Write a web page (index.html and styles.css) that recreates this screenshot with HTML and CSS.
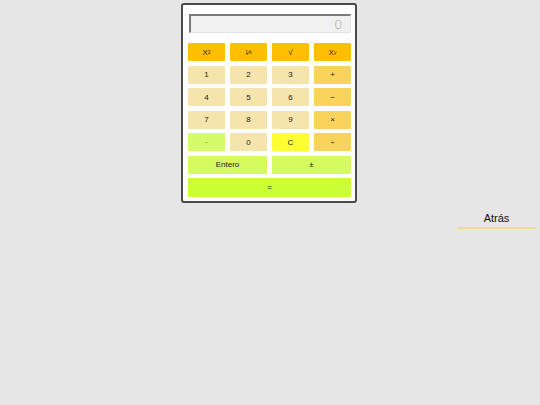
FILE: index.html
```html
<!DOCTYPE html>
<html lang="es">
<head>
<meta charset="utf-8">
<title>Calculadora</title>
<link rel="stylesheet" href="styles.css">
</head>
<body>
<div class="calc">
  <div class="display">0</div>
  <div class="keys">
    <div class="key k-fn">X<sup>2</sup></div>
    <div class="key k-fn"><sup>1</sup>&frasl;<sub>x</sub></div>
    <div class="key k-fn">&radic;</div>
    <div class="key k-fn">X<sup>y</sup></div>

    <div class="key k-num">1</div>
    <div class="key k-num">2</div>
    <div class="key k-num">3</div>
    <div class="key k-op">+</div>

    <div class="key k-num">4</div>
    <div class="key k-num">5</div>
    <div class="key k-num">6</div>
    <div class="key k-op">&minus;</div>

    <div class="key k-num">7</div>
    <div class="key k-num">8</div>
    <div class="key k-num">9</div>
    <div class="key k-op">&times;</div>

    <div class="key k-dot">&middot;</div>
    <div class="key k-num">0</div>
    <div class="key k-clear">C</div>
    <div class="key k-op">&divide;</div>

    <div class="key k-green span2">Entero</div>
    <div class="key k-green span2">&plusmn;</div>

    <div class="key k-eq span4">=</div>
  </div>
</div>
<div class="back-row">
  <a class="back" href="#">Atrás</a>
</div>
</body>
</html>
```
FILE: styles.css
```css
html, body {
  margin: 0;
  padding: 0;
}
body {
  background: #e6e6e6;
  font-family: "Liberation Sans", Arial, sans-serif;
  padding-top: 3px;
}
.calc {
  width: 163px;
  margin: 0 0 0 calc(50% - 89px);
  background: #fff;
  border: 2px solid #4a4a4a;
  border-radius: 3px;
  padding: 9px 4px 5px 5px;
  box-sizing: content-box;
}
.display {
  height: 16px;
  margin: 0 0 10px 1px;
  width: 151px;
  background: #f0f0f0;
  border-top: 2px solid #7a7a7a;
  border-left: 2px solid #7a7a7a;
  border-right: 1px solid #e6e6e6;
  border-bottom: 1px solid #e6e6e6;
  color: #a8a8a8;
  font-family: "Open Sans", "Liberation Sans", sans-serif;
  font-size: 13px;
  font-weight: 300;
  text-align: right;
  padding-right: 8px;
  line-height: 17px;
  box-sizing: content-box;
}
.keys {
  display: grid;
  grid-template-columns: repeat(4, 37px);
  grid-auto-rows: 18px;
  column-gap: 5px;
  row-gap: 4.5px;
}
.key {
  display: flex;
  align-items: center;
  justify-content: center;
  font-size: 8px;
  color: #222;
  border-radius: 1px;
}
.key sup, .key sub {
  font-size: 5px;
  line-height: 0;
}
.k-fn { background: #ffbf00; }
.k-num { background: #f5e4ab; }
.k-op { background: #fad35c; }
.k-dot { background: #d5fa6a; }
.k-clear { background: #ffff33; }
.k-green { background: #d5fb5e; }
.k-eq { background: #ccff33; height: 19px; }
.span2 { grid-column: span 2; }
.span4 { grid-column: span 4; }
.back-row {
  display: flex;
  justify-content: flex-end;
  padding-right: 4px;
  margin-top: 8px;
}
.back {
  display: block;
  width: 79px;
  text-align: center;
  color: #111;
  text-decoration: none;
  font-size: 11px;
  line-height: 14px;
  padding-bottom: 2px;
  border-bottom: 2px solid #f0db94;
}
```
